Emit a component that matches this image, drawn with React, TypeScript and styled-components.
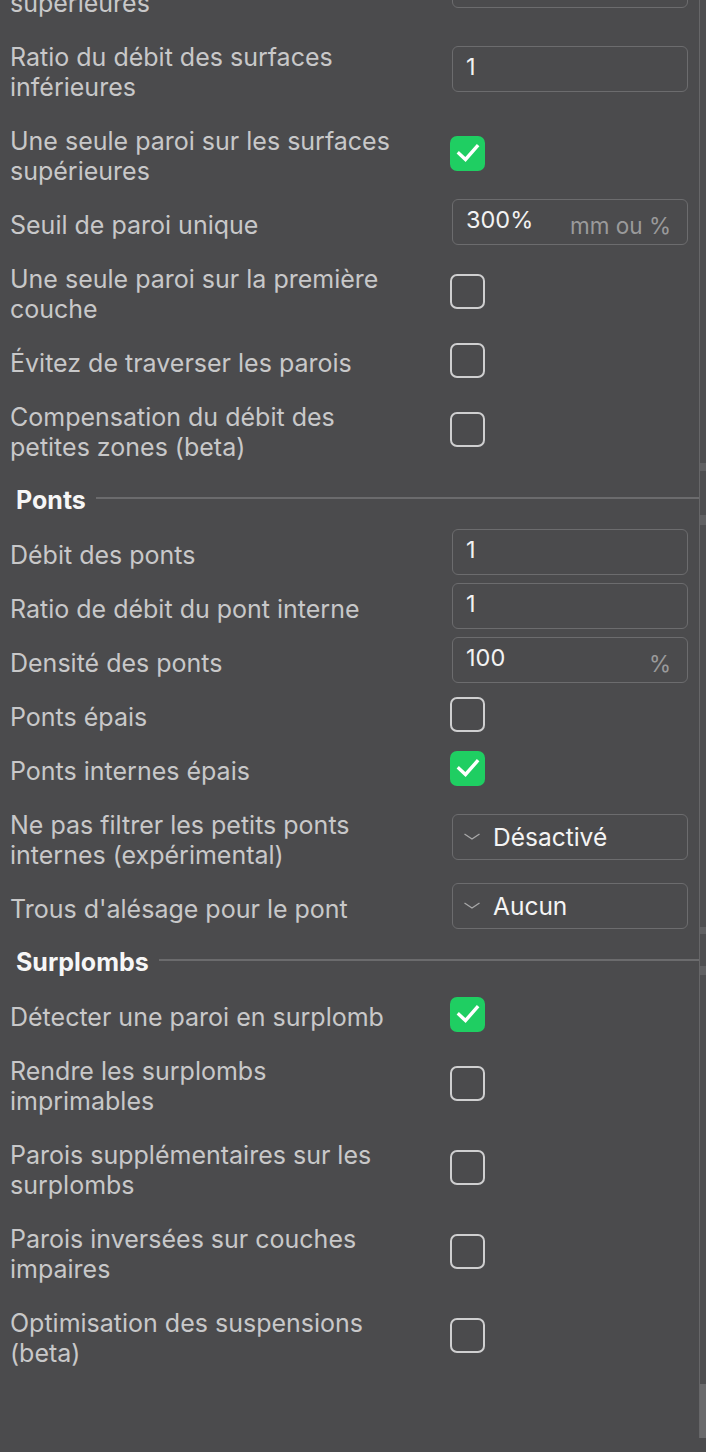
import styled, { createGlobalStyle } from "styled-components";

const GlobalStyle = createGlobalStyle`
  html, body {
    margin: 0;
    padding: 0;
    background: #4b4b4d;
    overflow: hidden;
  }
  body {
    font-family: Inter, "Noto Sans", sans-serif;
  }
`;

const Page = styled.div`
  position: relative;
  width: 706px;
  height: 1452px;
  overflow: hidden;
  background: #4b4b4d;
`;

const List = styled.div`
  display: flex;
  flex-direction: column;
  gap: 8px;
  margin-top: -53px;
  padding-right: 18px;
`;

const Row = styled.div<{ $tall?: boolean }>`
  display: grid;
  grid-template-columns: 440px 1fr;
  align-items: center;
  min-height: ${(p) => (p.$tall ? 76 : 46)}px;
`;

const Label = styled.div`
  max-width: 396px;
  padding: 5px 0 0 10px;
  color: #c8c8c9;
  font-size: 25px;
  line-height: 30px;
`;

const Control = styled.div`
  display: flex;
  align-items: center;
  padding-left: 12px;
`;

const Field = styled.div`
  box-sizing: border-box;
  width: 236px;
  height: 46px;
  border: 1.5px solid #6c6c6e;
  border-radius: 6px;
  display: flex;
  align-items: center;
  padding: 0 16px 0 13px;
`;

const Value = styled.span`
  flex: 1;
  color: #f2f2f2;
  font-size: 23.5px;
  margin-top: -6px;
`;

const Unit = styled.span`
  color: #9a9a9b;
  font-size: 22.5px;
  margin-top: 6px;
`;

const Select = styled(Field)`
  padding-left: 10px;
  gap: 12px;
`;

const SelectText = styled.span`
  color: #f4f4f4;
  font-size: 24.5px;
`;

const Box = styled.div<{ $on?: boolean }>`
  box-sizing: border-box;
  width: 35px;
  height: 35px;
  margin-left: -2px;
  border-radius: 7px;
  border: ${(p) => (p.$on ? "none" : "2px solid #cfcfd0")};
  background: ${(p) => (p.$on ? "#1fce62" : "transparent")};
  display: flex;
  align-items: center;
  justify-content: center;
`;

const Header = styled.div`
  display: flex;
  align-items: center;
  gap: 10px;
  height: 46px;
  margin-right: -18px;
  padding-left: 16px;
  color: #f6f6f6;
  font-size: 25px;
  font-weight: 700;
`;

const HeaderText = styled.span`
  padding-top: 3px;
`;

const HeaderLine = styled.div`
  flex: 1;
  height: 2px;
  background: #6b6b6d;
`;

const Scrollbar = styled.div`
  position: absolute;
  top: 0;
  right: 0;
  width: 6px;
  height: 1438px;
  border-left: 1px solid #666668;
  background: #4e4e50;
`;

const ScrollMark = styled.div`
  position: absolute;
  left: 0;
  right: 0;
  background: #606062;
`;

const Thumb = styled.div`
  position: absolute;
  left: 0;
  right: 0;
  bottom: 0;
  height: 54px;
  background: #6a6a6c;
`;

type Item =
  | { kind: "header"; label: string }
  | { kind: "input"; label: string; value: string; unit?: string; tall?: boolean }
  | { kind: "check"; label: string; on?: boolean; tall?: boolean }
  | { kind: "select"; label: string; value: string; tall?: boolean };

const items: Item[] = [
  { kind: "input", label: "Ratio du débit des surfaces supérieures", value: "1", tall: true },
  { kind: "input", label: "Ratio du débit des surfaces inférieures", value: "1", tall: true },
  { kind: "check", label: "Une seule paroi sur les surfaces supérieures", on: true, tall: true },
  { kind: "input", label: "Seuil de paroi unique", value: "300%", unit: "mm ou %" },
  { kind: "check", label: "Une seule paroi sur la première couche", tall: true },
  { kind: "check", label: "Évitez de traverser les parois" },
  { kind: "check", label: "Compensation du débit des petites zones (beta)", tall: true },
  { kind: "header", label: "Ponts" },
  { kind: "input", label: "Débit des ponts", value: "1" },
  { kind: "input", label: "Ratio de débit du pont interne", value: "1" },
  { kind: "input", label: "Densité des ponts", value: "100", unit: "%" },
  { kind: "check", label: "Ponts épais" },
  { kind: "check", label: "Ponts internes épais", on: true },
  { kind: "select", label: "Ne pas filtrer les petits ponts internes (expérimental)", value: "Désactivé", tall: true },
  { kind: "select", label: "Trous d'alésage pour le pont", value: "Aucun" },
  { kind: "header", label: "Surplombs" },
  { kind: "check", label: "Détecter une paroi en surplomb", on: true },
  { kind: "check", label: "Rendre les surplombs imprimables", tall: true },
  { kind: "check", label: "Parois supplémentaires sur les surplombs", tall: true },
  { kind: "check", label: "Parois inversées sur couches impaires", tall: true },
  { kind: "check", label: "Optimisation des suspensions (beta)", tall: true },
];

function Check() {
  return (
    <svg width="24" height="20" viewBox="0 0 24 20">
      <path d="M3 10.5 L9.5 16.5 L21 3.5" fill="none" stroke="#ffffff" strokeWidth="3.4" strokeLinecap="square" />
    </svg>
  );
}

function Chevron() {
  return (
    <svg width="18" height="10" viewBox="0 0 18 10">
      <path d="M1.5 2 L9 7 L16.5 2" fill="none" stroke="#a8a8a9" strokeWidth="1.3" />
    </svg>
  );
}

function renderControl(item: Item) {
  switch (item.kind) {
    case "input":
      return (
        <Field>
          <Value>{item.value}</Value>
          {item.unit && <Unit>{item.unit}</Unit>}
        </Field>
      );
    case "check":
      return <Box $on={item.on}>{item.on && <Check />}</Box>;
    case "select":
      return (
        <Select>
          <Chevron />
          <SelectText>{item.value}</SelectText>
        </Select>
      );
    default:
      return null;
  }
}

export default function App() {
  return (
    <Page>
      <GlobalStyle />
      <List>
        {items.map((item) =>
          item.kind === "header" ? (
            <Header key={item.label}>
              <HeaderText>{item.label}</HeaderText>
              <HeaderLine />
            </Header>
          ) : (
            <Row key={item.label} $tall={item.tall}>
              <Label>{item.label}</Label>
              <Control>{renderControl(item)}</Control>
            </Row>
          )
        )}
      </List>
      <Scrollbar>
        <ScrollMark style={{ top: 463, height: 8 }} />
        <ScrollMark style={{ top: 515, height: 10 }} />
        <ScrollMark style={{ top: 927, height: 7 }} />
        <ScrollMark style={{ top: 966, height: 9 }} />
        <Thumb />
      </Scrollbar>
    </Page>
  );
}
